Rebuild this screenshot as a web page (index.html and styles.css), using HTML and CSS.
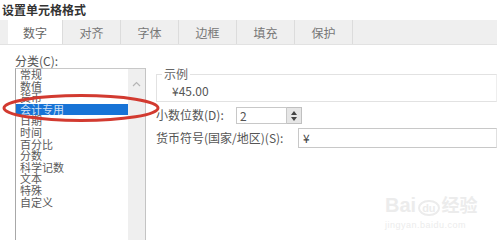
FILE: index.html
```html
<!DOCTYPE html>
<html>
<head>
	<meta charset="utf-8">
	<title>设置单元格格式</title>
	<link rel="stylesheet" href="styles.css">
</head>
<body>
<div class="dlg">
	<h2 class="dlg-title">设置单元格格式</h2>
	<ul class="tabs">
		<li class="current">数字</li>
		<li>对齐</li>
		<li>字体</li>
		<li>边框</li>
		<li>填充</li>
		<li>保护</li>
	</ul>
	<div class="panel">
		<div class="cat">
			<p class="cat-label">分类(<u>C</u>):</p>
			<div class="listbox">
				<ul class="items">
					<li>常规</li>
					<li>数值</li>
					<li>货币</li>
					<li class="sel">会计专用</li>
					<li>日期</li>
					<li>时间</li>
					<li>百分比</li>
					<li>分数</li>
					<li>科学记数</li>
					<li>文本</li>
					<li>特殊</li>
					<li>自定义</li>
				</ul>
				<div class="scroll">
					<svg width="9" height="6" viewBox="0 0 9 6"><path d="M1 5 L4.5 1.5 L8 5" fill="none" stroke="#b5b5b5" stroke-width="1.2"/></svg>
				</div>
			</div>
		</div>
		<div class="opts">
			<div class="sample">
				<div class="sample-title">示例</div>
				<span>¥45.00</span>
			</div>
			<div class="row">
				<label>小数位数(<u>D</u>):</label>
				<div class="num">2</div>
				<div class="spin">
					<svg width="8" height="12" viewBox="0 0 8 12"><path d="M4 1 L7 5 L1 5 Z M1 7 L7 7 L4 11 Z" fill="#444"/></svg>
				</div>
			</div>
			<div class="row row2">
				<label>货币符号(国家/地区)(<u>S</u>):</label>
				<div class="sym">¥</div>
			</div>
		</div>
	</div>
	<svg class="mark" width="160" height="30" viewBox="0 0 160 30"><ellipse cx="80" cy="15" rx="77" ry="12.5" fill="none" stroke="#d23a30" stroke-width="3"/></svg>
	<div class="wm">
		<div class="wm-top"><span class="wm-bai">Bai</span><span class="wm-du">du</span><span class="wm-jy">经验</span></div>
		<div class="wm-url">jingyan.baidu.com</div>
	</div>
</div>
</body>
</html>
```
FILE: styles.css
```css
body,div,h2,ul,li,p{margin:0;padding:0;}
ul{list-style-type:none;}
u{text-decoration:none;}
body{background:#fff;color:#555;font:12px/1.2 "Noto Sans CJK SC","DejaVu Sans",sans-serif;}
.dlg{position:relative;width:500px;height:240px;overflow:hidden;}
.dlg-title{font:700 12px/14px "Noto Sans CJK SC",sans-serif;color:#333;padding:3px 0 0 2px;height:17px;}
.tabs{display:flex;height:24px;margin-right:3px;padding-left:8px;background:#efefef;border-bottom:1px solid #e2e2e2;}
.tabs li{width:57px;border-right:1px solid #dcdcdc;text-align:center;line-height:26px;color:#777;}
.tabs li.current{width:54px;background:#fff;color:#666;}
.panel{display:flex;}
.cat{padding-left:15px;}
.cat-label{line-height:12px;margin-top:10px;color:#555;}
.listbox{display:flex;width:129px;height:172px;margin-top:1px;border-left:1px solid #a8a8a8;border-top:1px solid #c8c8c8;border-right:1px solid #c4c4c4;}
.items{width:112px;}
.items li{height:11.6px;line-height:11.6px;padding-left:4px;font-size:11px;color:#5a5a5a;}
.items li.sel{background:#1773d6;color:#cfe0f5;}
.scroll{width:17px;background:#efefef;text-align:center;padding-top:6px;}
.opts{flex:1;margin-left:10px;margin-right:3px;margin-top:29px;}
.sample{border:1px solid #e2e2e2;border-right-color:#eee;height:26px;}
.sample-title{display:table;margin:-7px 0 0 5px;padding:0 2px;background:#fff;line-height:12px;color:#666;}
.sample span{display:block;margin:5px 0 0 15px;line-height:12px;color:#555;}
.row{display:flex;align-items:center;margin-top:5px;height:17px;}
.row label{width:80px;color:#555;}
.num{width:46px;height:15px;border:1px solid #c8c8c8;line-height:15px;padding-left:3px;color:#555;}
.spin{width:14px;height:15px;border:1px solid #c0c0c0;border-left:0;background:#e6e6e6;display:flex;align-items:center;justify-content:center;}
.row2{margin-top:4px;height:20px;}
.row2 label{width:142px;}
.sym{flex:1;height:18px;border:1px solid #c8c8c8;border-right-color:#e0e0e0;line-height:18px;padding-left:4px;color:#444;}
.mark{position:absolute;left:1px;top:93px;}
.wm{position:absolute;left:385px;top:193px;color:#ececec;}
.wm-top{font:700 20px/22px "Liberation Sans",sans-serif;}
.wm-du{font-size:11px;border:2px solid #ececec;border-radius:50%;padding:0 2px;margin:0 2px;}
.wm-jy{font:700 18px/22px "Noto Sans CJK SC",sans-serif;}
.wm-url{font:9px/12px "Liberation Sans",sans-serif;letter-spacing:0.5px;}
```
